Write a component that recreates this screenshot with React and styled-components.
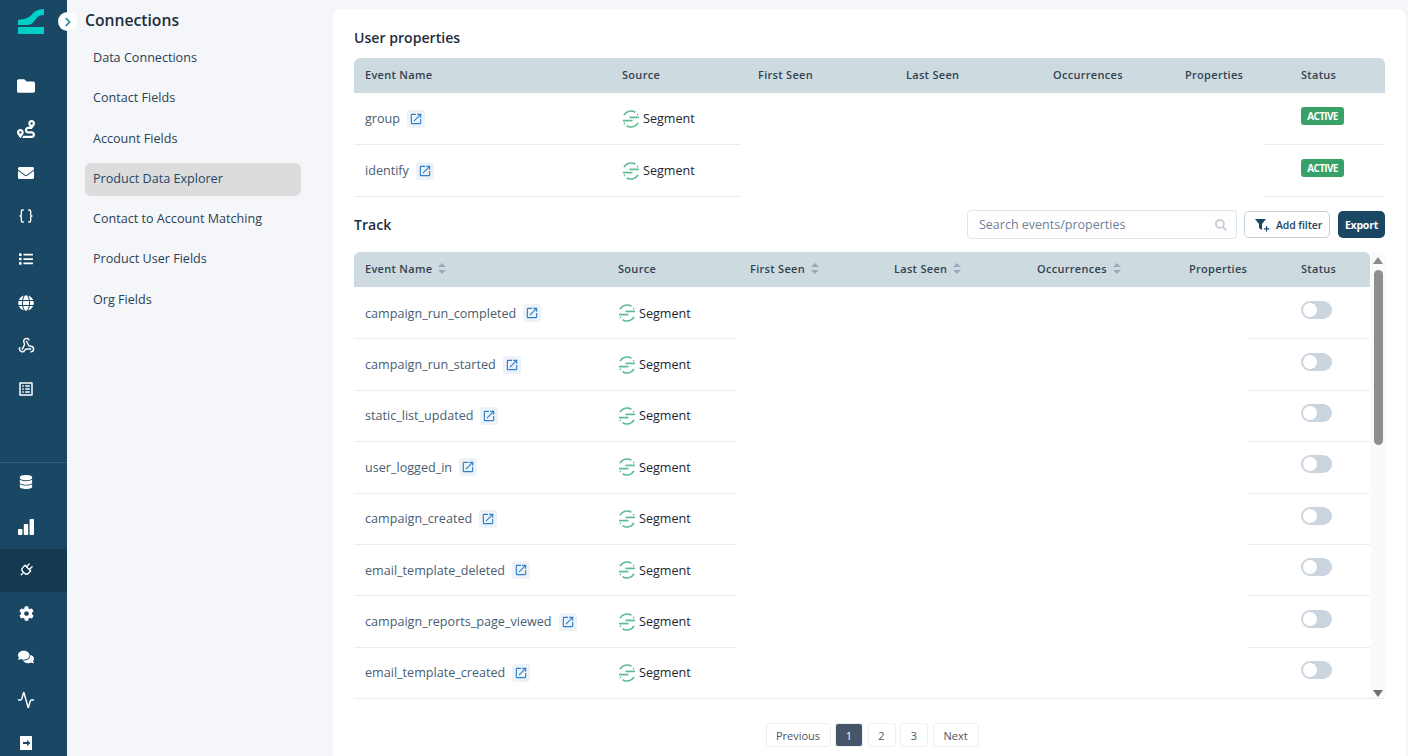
import React from 'react';
import styled, { createGlobalStyle } from 'styled-components';
import {
  FaFolder, FaRoute, FaEnvelope, FaList, FaGlobe, FaDatabase, FaCog, FaComments, FaSearch, FaChevronRight,
} from 'react-icons/fa';
import { LuBraces, LuWebhook, LuActivity, LuPlug } from 'react-icons/lu';
import { MdOpenInNew, MdOutlineListAlt } from 'react-icons/md';

const GlobalStyle = createGlobalStyle`
  html, body { margin: 0; padding: 0; height: 100%; }
  body {
    font-family: "Open Sans", "Noto Sans", sans-serif;
    background: #f4f6f9;
    overflow: hidden;
  }
  * { box-sizing: border-box; }
`;

const Page = styled.div`
  display: flex;
  width: 1408px;
  height: 756px;
  overflow: hidden;
`;

const Rail = styled.aside`
  position: relative;
  width: 67px;
  flex: none;
  background: #1a4763;
  display: flex;
  flex-direction: column;
`;

const Logo = styled.div`
  flex: none;
  height: 64.5px;
  padding: 9px 0 0 18px;
`;

const RailGroup = styled.div`
  flex: none;
  display: flex;
  flex-direction: column;
  ${p => p.$bottom && 'border-top: 1px solid #36607a; margin-top: 51px;'}
`;

const RailItem = styled.div`
  flex: none;
  height: ${p => p.$h || 43.3}px;
  padding: 0 15px ${p => p.$pb || 0}px 0;
  display: flex;
  align-items: center;
  justify-content: center;
  color: #fff;
  font-size: ${p => p.$size || 16}px;
  background: ${p => (p.$active ? '#143a53' : 'transparent')};
`;

const Collapse = styled.div`
  position: absolute;
  left: 58px;
  top: 12px;
  width: 19px;
  height: 19px;
  border-radius: 50%;
  background: #fff;
  color: #1f8f96;
  font-size: 10px;
  display: flex;
  align-items: center;
  justify-content: center;
`;

const SubNav = styled.nav`
  width: 266px;
  flex: none;
  padding: 9px 32px 0 18px;
`;

const SubTitle = styled.h1`
  margin: 0 0 11px;
  font-size: 15.7px;
  line-height: 22px;
  font-weight: 600;
  color: #1f2d3d;
`;

const SubLink = styled.div`
  height: 33px;
  margin-bottom: 7.3px;
  padding: 0 8px 2px;
  display: flex;
  align-items: center;
  font-size: 12.6px;
  color: #2b3f55;
  border-radius: 6px;
  background: ${p => (p.$active ? '#dcdcdc' : 'transparent')};
  ${p => p.$active && 'color: #1f4767;'}
`;

const Main = styled.main`
  width: 1073px;
  height: 760px;
  margin-top: 9px;
  padding: 18px 21px 0;
  background: #fff;
  border-radius: 8px;
`;

const SectionTitle = styled.h2`
  margin: 0;
  font-size: 14.1px;
  line-height: 22px;
  font-weight: 600;
  color: #1f2d3d;
`;

const HeadRow = styled.div`
  display: grid;
  grid-template-columns: ${p => p.$cols};
  height: 35px;
  margin-top: ${p => p.$top || 0}px;
  margin-bottom: ${p => p.$after || 0}px;
  padding-bottom: 2px;
  align-items: center;
  background: #cddbe1;
  border-radius: 6px 6px 0 0;
  width: ${p => p.$width}px;
`;

const HeadCell = styled.div`
  padding-left: 11px;
  display: flex;
  align-items: center;
  gap: 6px;
  font-size: 11px;
  font-weight: 600;
  letter-spacing: 0.3px;
  color: #33424f;
`;

const Sort = styled.span`
  display: inline-flex;
  flex-direction: column;
  gap: 3px;
  &::before, &::after {
    content: '';
    border-left: 4px solid transparent;
    border-right: 4px solid transparent;
  }
  &::before { border-bottom: 4px solid #9aa9b5; }
  &::after { border-top: 4px solid #9aa9b5; }
`;

const BodyRow = styled.div`
  display: grid;
  grid-template-columns: ${p => p.$cols};
  height: ${p => p.$h}px;
`;

const Cell = styled.div`
  display: flex;
  align-items: center;
  padding-left: ${p => p.$pad || 11}px;
  padding-bottom: ${p => p.$lift || 0}px;
  ${p => p.$line && 'border-bottom: 1px solid #e8edf2;'}
`;

const EventName = styled.span`
  font-size: 12.6px;
  color: #4a5d73;
`;

const LinkBadge = styled.span`
  width: 18px;
  height: 18px;
  margin-left: 7px;
  border-radius: 3px;
  background: #eef3f8;
  color: #2f80d0;
  font-size: 14px;
  display: inline-flex;
  align-items: center;
  justify-content: center;
`;

const SourceName = styled.span`
  margin-left: 3px;
  font-size: 12.6px;
  color: #1c2733;
`;

const ActiveTag = styled.span`
  width: 43px;
  height: 18px;
  border-radius: 3px;
  background: #38a169;
  color: #fff;
  font-size: 10px;
  font-weight: 700;
  letter-spacing: -0.7px;
  display: flex;
  align-items: center;
  justify-content: center;
`;

const Toggle = styled.span`
  width: 31px;
  height: 18px;
  border-radius: 9px;
  background: #cbd5e0;
  padding: 2px;
  display: flex;
  &::before {
    content: '';
    width: 14px;
    height: 14px;
    border-radius: 50%;
    background: #fff;
  }
`;

const TrackBar = styled.div`
  display: flex;
  align-items: center;
  height: 29px;
  margin-top: 13px;
`;

const SearchBox = styled.div`
  margin-left: auto;
  width: 270px;
  height: 29px;
  padding: 0 9px 0 11px;
  border: 1px solid #dfe5ec;
  border-radius: 4px;
  display: flex;
  align-items: center;
  justify-content: space-between;
  font-size: 12.5px;
  color: #6f8094;
  svg { color: #c9d0d8; font-size: 12px; }
`;

const FilterButton = styled.div`
  margin-left: 7px;
  width: 86px;
  height: 27px;
  padding-left: 10px;
  border: 1px solid #c5ced8;
  border-radius: 5px;
  display: flex;
  align-items: center;
  gap: 6px;
  font-size: 10.5px;
  font-weight: 600;
  letter-spacing: -0.1px;
  color: #1a4763;
`;

const ExportButton = styled.div`
  margin-left: 8px;
  width: 47px;
  height: 27px;
  border-radius: 5px;
  background: #1a4763;
  color: #fff;
  font-size: 10.5px;
  font-weight: 700;
  letter-spacing: -0.2px;
  display: flex;
  align-items: center;
  justify-content: center;
`;

const TrackArea = styled.div`
  display: flex;
  margin-top: 13px;
  height: 447px;
  border-bottom: 1px solid #e8edf2;
`;

const TrackTable = styled.div`
  width: 1016px;
  flex: none;
`;

const ScrollBar = styled.div`
  width: 15px;
  margin-left: 1px;
  background: #fafafa;
  display: flex;
  flex-direction: column;
  align-items: center;
  padding-top: 5px;
`;

const ArrowUp = styled.span`
  border-left: 5px solid transparent;
  border-right: 5px solid transparent;
  border-bottom: 7px solid #8a8a8a;
`;

const ArrowDown = styled.span`
  margin-top: auto;
  margin-bottom: 1px;
  border-left: 5px solid transparent;
  border-right: 5px solid transparent;
  border-top: 7px solid #6f6f6f;
`;

const Thumb = styled.div`
  width: 9px;
  height: 175px;
  margin-top: 6px;
  border-radius: 5px;
  background: #8f8f8f;
`;

const Pager = styled.div`
  display: flex;
  justify-content: center;
  gap: 4.5px;
  margin-top: 24px;
  padding-left: 5px;
`;

const PageButton = styled.div`
  height: 24px;
  width: ${p => p.$w || 28}px;
  border: 1px solid #eceff3;
  border-radius: 3px;
  display: flex;
  align-items: center;
  justify-content: center;
  font-size: 11px;
  color: ${p => (p.$active ? '#fff' : '#4a5560')};
  background: ${p => (p.$active ? '#46556a' : '#fff')};
`;

const FilterPlus = () => (
  <svg width="15" height="14" viewBox="0 0 15 14" fill="#1a4763">
    <path d="M0 1h11L7 6v6L4 10V6z" />
    <path d="M11 8h1.2v2.2h2.2v1.2h-2.2v2.2H11v-2.2H8.8v-1.2H11z" />
  </svg>
);

const LeaveIcon = () => (
  <svg width="16" height="16" viewBox="0 0 16 16">
    <rect x="2" y="1" width="12" height="14" fill="#fff" />
    <path d="M5 7h4V5l3.5 3L9 11V9H5z" fill="#1a4763" />
  </svg>
);

const SignalIcon = () => (
  <svg width="16" height="16" viewBox="0 0 16 16" fill="#fff">
    <rect x="0" y="10" width="4.4" height="6" rx="0.8" />
    <rect x="5.8" y="5" width="4.4" height="11" rx="0.8" />
    <rect x="11.6" y="0" width="4.4" height="16" rx="0.8" />
  </svg>
);

const BrandMark = () => (
  <svg width="26" height="25" viewBox="0 0 26 25" fill="#00cfc8">
    <path d="M0 11c9-1 12-3 15-7 3-3 7-4 11-4v6c-4 0-6 1-8 4-2 2-4 6-8 6H0z" />
    <rect x="0" y="18" width="26" height="7" />
  </svg>
);

const SegmentMark = () => (
  <svg width="18" height="18" viewBox="0 0 18 18" fill="none" stroke="#5dbb92" strokeWidth="1.7">
    <path d="M2 5.2A8 8 0 0 1 13.4 2.3" />
    <path d="M16 12.8A8 8 0 0 1 4.6 15.7" />
    <path d="M1 10.6h9.5" />
    <path d="M7.5 7.4H17" />
    <path d="M15 4.7h1.2M1.8 13.3h1.2" />
  </svg>
);

const railTop = [
  [<FaFolder />, 18], [<FaRoute />, 18], [<FaEnvelope />, 16], [<LuBraces />, 16], [<FaList />, 14],
  [<FaGlobe />, 16], [<LuWebhook />, 17], [<MdOutlineListAlt />, 18],
];

const USER_COLS = '257px 136px 148px 147px 132px 116px 95px';
const USER_BODY = '257px 129px 1fr 121px';
const TRACK_COLS = '253px 132px 144px 143px 152px 112px 80px';
const TRACK_BODY = '253px 129px 1fr 122px';

const trackEvents = [
  'campaign_run_completed', 'campaign_run_started', 'static_list_updated', 'user_logged_in',
  'campaign_created', 'email_template_deleted', 'campaign_reports_page_viewed', 'email_template_created',
];

const subLinks = [
  'Data Connections', 'Contact Fields', 'Account Fields', 'Product Data Explorer',
  'Contact to Account Matching', 'Product User Fields', 'Org Fields',
];

const EventCell = ({ name }) => (
  <Cell $line>
    <EventName>{name}</EventName>
    <LinkBadge><MdOpenInNew /></LinkBadge>
  </Cell>
);

const SourceCell = () => (
  <Cell $line>
    <SegmentMark />
    <SourceName>Segment</SourceName>
  </Cell>
);

export default function App() {
  return (
    <Page>
      <GlobalStyle />
      <Rail>
        <Logo><BrandMark /></Logo>
        <Collapse><FaChevronRight /></Collapse>
        <RailGroup>
          {railTop.map(([icon, size], i) => <RailItem key={i} $size={size}>{icon}</RailItem>)}
        </RailGroup>
        <RailGroup $bottom>
          <RailItem $h={42} $pb={4} $size={14}><FaDatabase /></RailItem>
          <RailItem $h={44}><SignalIcon /></RailItem>
          <RailItem $h={43} $active><LuPlug style={{ transform: 'rotate(45deg)' }} /></RailItem>
          <RailItem $size={15}><FaCog /></RailItem>
          <RailItem $size={16}><FaComments /></RailItem>
          <RailItem $size={18}><LuActivity /></RailItem>
          <RailItem><LeaveIcon /></RailItem>
        </RailGroup>
      </Rail>

      <SubNav>
        <SubTitle>Connections</SubTitle>
        {subLinks.map(l => (
          <SubLink key={l} $active={l === 'Product Data Explorer'}>{l}</SubLink>
        ))}
      </SubNav>

      <Main>
        <SectionTitle>User properties</SectionTitle>
        <HeadRow $cols={USER_COLS} $top={9} $width={1031}>
          {['Event Name', 'Source', 'First Seen', 'Last Seen', 'Occurrences', 'Properties', 'Status'].map(h => (
            <HeadCell key={h}>{h}</HeadCell>
          ))}
        </HeadRow>
        {['group', 'identify'].map(name => (
          <BodyRow key={name} $cols={USER_BODY} $h={52}>
            <EventCell name={name} />
            <SourceCell />
            <Cell />
            <Cell $line $pad={37} $lift={6}><ActiveTag>ACTIVE</ActiveTag></Cell>
          </BodyRow>
        ))}

        <TrackBar>
          <SectionTitle>Track</SectionTitle>
          <SearchBox>Search events/properties<FaSearch /></SearchBox>
          <FilterButton><FilterPlus />Add filter</FilterButton>
          <ExportButton>Export</ExportButton>
        </TrackBar>

        <TrackArea>
          <TrackTable>
            <HeadRow $cols={TRACK_COLS} $width={1016} $after={1}>
              <HeadCell>Event Name<Sort /></HeadCell>
              <HeadCell>Source</HeadCell>
              <HeadCell>First Seen<Sort /></HeadCell>
              <HeadCell>Last Seen<Sort /></HeadCell>
              <HeadCell>Occurrences<Sort /></HeadCell>
              <HeadCell>Properties</HeadCell>
              <HeadCell>Status</HeadCell>
            </HeadRow>
            {trackEvents.map(name => (
              <BodyRow key={name} $cols={TRACK_BODY} $h={51.4}>
                <EventCell name={name} />
                <SourceCell />
                <Cell />
                <Cell $line $pad={53} $lift={6}><Toggle /></Cell>
              </BodyRow>
            ))}
          </TrackTable>
          <ScrollBar>
            <ArrowUp />
            <Thumb />
            <ArrowDown />
          </ScrollBar>
        </TrackArea>

        <Pager>
          <PageButton $w={65}>Previous</PageButton>
          <PageButton $active>1</PageButton>
          <PageButton>2</PageButton>
          <PageButton>3</PageButton>
          <PageButton $w={46}>Next</PageButton>
        </Pager>
      </Main>
    </Page>
  );
}
